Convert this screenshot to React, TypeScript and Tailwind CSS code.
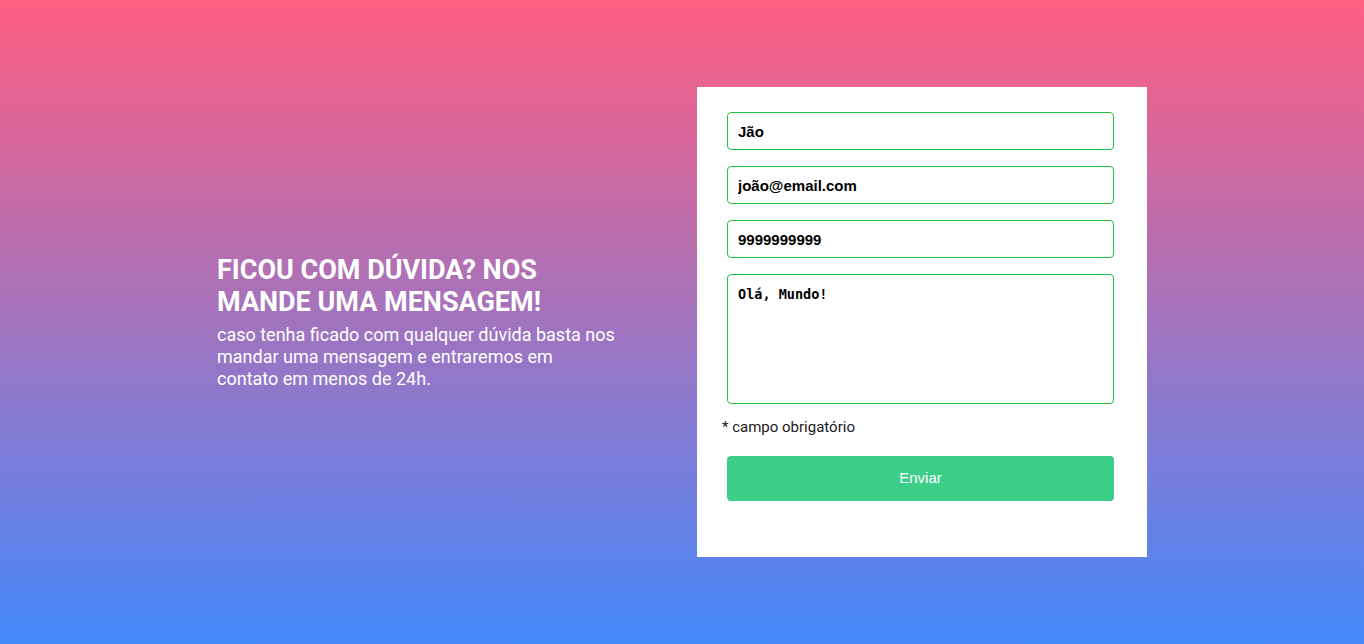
export default function App() {
  return (
    <div className="flex h-[644px] w-full items-center justify-center gap-20 bg-[linear-gradient(180deg,#ff5e81,#4489fb)]">
      {/* Intro text */}
      <div className="w-[400px] font-['Roboto',sans-serif] text-white">
        <h1 className="w-[360px] text-[27px] font-bold leading-[32px]">
          FICOU COM DÚVIDA? NOS MANDE UMA MENSAGEM!
        </h1>
        <p className="mt-[6px] text-[18px] leading-[22px]">
          caso tenha ficado com qualquer dúvida basta nos mandar uma mensagem e entraremos em contato em menos de 24h.
        </p>
      </div>

      {/* Form card */}
      <form className="flex h-[470px] w-[450px] flex-col bg-white pl-[30px] pr-[33px] pt-[25px]">
        <div className="flex flex-col gap-4">
          <input
            defaultValue="Jão"
            className="h-[38px] rounded-[4px] border border-[#1fc142] px-[10px] font-['Liberation_Sans',sans-serif] text-[15px] font-bold text-black outline-none"
          />
          <input
            defaultValue="joão@email.com"
            className="h-[38px] rounded-[4px] border border-[#1fc142] px-[10px] font-['Liberation_Sans',sans-serif] text-[15px] font-bold text-black outline-none"
          />
          <input
            defaultValue="9999999999"
            className="h-[38px] rounded-[4px] border border-[#1fc142] px-[10px] font-['Liberation_Sans',sans-serif] text-[15px] font-bold text-black outline-none"
          />
          <textarea
            defaultValue="Olá, Mundo!"
            className="h-[130px] resize-none rounded-[4px] border border-[#1fc142] px-[10px] pb-[10px] pt-[11px] font-['DejaVu_Sans_Mono',monospace] text-[13.5px] font-bold leading-[17px] text-black outline-none"
          />
        </div>
        <p className="-ml-[5px] mt-[13px] font-['Roboto',sans-serif] text-[15px] leading-[20px] text-[#1a1a1a]">
          * campo obrigatório
        </p>
        <button
          type="button"
          className="mt-[19px] h-[45px] rounded-[4px] bg-[#3ccd88] font-['Liberation_Sans',sans-serif] text-[15px] text-white"
        >
          Enviar
        </button>
      </form>
    </div>
  );
}
